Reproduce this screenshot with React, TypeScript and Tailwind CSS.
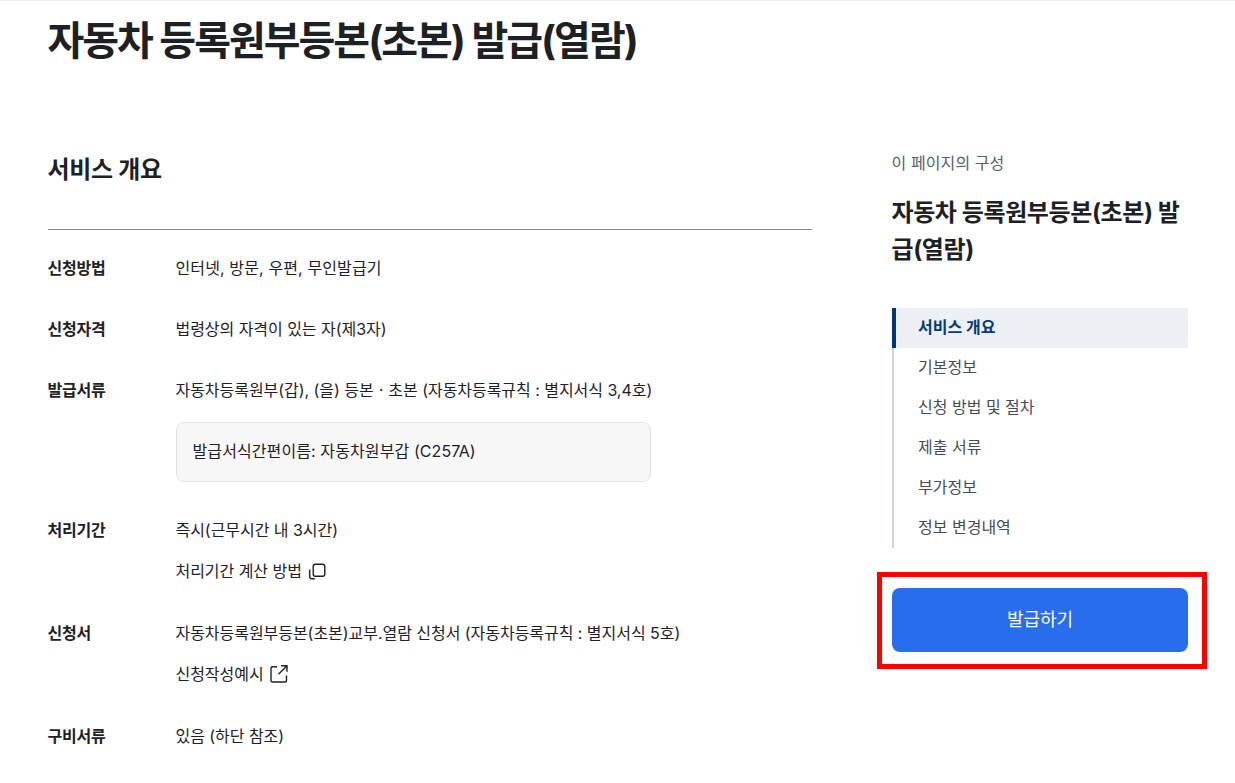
import React from "react";

const font = { fontFamily: '"Inter", "Noto Sans CJK KR", sans-serif' };

function CopyIcon() {
  return (
    <svg width="18" height="18" viewBox="0 0 18 18" fill="none" stroke="#1e2124" strokeWidth="1.4" className="ml-[6px] shrink-0">
      <rect x="5.200" y="2.200" width="11.600" height="12" rx="2.200" />
      <path d="M1.700 7.500V14.500a2.300 2.300 0 0 0 2.300 2.300h2.800" />
    </svg>
  );
}

function ExternalIcon() {
  return (
    <svg width="18" height="18" viewBox="0 0 18 18" fill="none" stroke="#1e2124" strokeWidth="1.4" className="ml-[6px] shrink-0">
      <path d="M7 1.700H2.500A1.500 1.500 0 0 0 1 3.200V15.500a1.500 1.500 0 0 0 1.500 1.500h12.500a1.500 1.500 0 0 0 1.500-1.500v-5" />
      <path d="M11 .700h6V6.700M17 .700 8.500 9.200" />
    </svg>
  );
}

function Row({ label, children }: { label: string; children: React.ReactNode }) {
  return (
    <div className="flex">
      <div className="w-[128px] shrink-0 text-[16px] leading-[26px] font-bold text-[#1e2124] tracking-[-0.2px]">{label}</div>
      <div className="flex-1 flex flex-col gap-[15px] text-[16px] leading-[26px] text-[#1e2124] tracking-[-0.040px]">{children}</div>
    </div>
  );
}

const nav = ["기본정보", "신청 방법 및 절차", "제출 서류", "부가정보", "정보 변경내역"];

export default function App() {
  return (
    <div style={font} className="h-[783px] w-[1235px] overflow-hidden bg-white border-t border-[#eeeeee] flex pl-[47.500px] pr-[47px] box-border">
      <main className="w-[764.500px] shrink-0">
        <h1 className="mt-[14px] text-[40px] leading-[52px] font-bold text-[#1e2124] tracking-[-2px] whitespace-nowrap">자동차 등록원부등본(초본) 발급(열람)</h1>
        <h2 className="mt-[86px] text-[24px] leading-[34px] font-bold text-[#1e2124] tracking-[-0.3px]">서비스 개요</h2>
        <div className="mt-[42px] border-t border-[#8a8a8a]" />
        <div className="mt-[25px] flex flex-col gap-[35px]">
          <Row label="신청방법"><p className="tracking-[0.120px]">인터넷, 방문, 우편, 무인발급기</p></Row>
          <Row label="신청자격"><p>법령상의 자격이 있는 자(제3자)</p></Row>
          <Row label="발급서류">
            <p>자동차등록원부(갑), (을) 등본ㆍ초본 (자동차등록규칙 : 별지서식 3,4호)</p>
            <div className="mt-[4px] w-[475px] h-[60px] box-border rounded-[8px] border border-[#e4e4e4] bg-[#f7f7f7] px-[16px] flex items-center"><span className="-mt-[3px] tracking-[0.100px]">발급서식간편이름: 자동차원부갑 (C257A)</span></div>
          </Row>
          <Row label="처리기간">
            <p>즉시(근무시간 내 3시간)</p>
            <p className="flex items-center">처리기간 계산 방법<CopyIcon /></p>
          </Row>
          <div className="mt-[1px]">
            <Row label="신청서">
              <p>자동차등록원부등본(초본)교부.열람 신청서 (자동차등록규칙 : 별지서식 5호)</p>
              <p className="flex items-center">신청작성예시<ExternalIcon /></p>
            </Row>
          </div>
          <div className="mt-[1px]">
            <Row label="구비서류"><p>있음 (하단 참조)</p></Row>
          </div>
        </div>
      </main>
      <aside className="ml-[79.500px] w-[296.500px] shrink-0">
        <p className="mt-[149px] text-[16px] leading-[26px] text-[#58616a] tracking-[0.100px]">이 페이지의 구성</p>
        <h3 className="mt-[17.500px] w-[296px] text-[24px] leading-[37px] font-bold text-[#1e2124] tracking-[-0.4px]">자동차 등록원부등본(초본) 발급(열람)</h3>
        <nav className="ml-[0.500px] mt-[40.500px] border-l-2 border-[#cdd5df] flex flex-col">
          <div className="-ml-[2px] h-[40px] pb-[2px] bg-[#ecf0f5] border-l-4 border-[#003675] pl-[22px] flex items-center text-[16px] font-bold text-[#063a74]">서비스 개요</div>
          {nav.map((n) => (
            <div key={n} className="h-[40px] pb-[2px] pl-[24px] flex items-center text-[16px] text-[#464c53]">{n}</div>
          ))}
        </nav>
        <div className="ml-[0.500px] relative mt-[40px]">
          <div className="h-[64px] pb-[2px] rounded-[8px] bg-[#286deb] flex items-center justify-center text-[18px] text-white">발급하기</div>
          <div className="absolute -left-[15px] -right-[19px] -top-[16px] -bottom-[17px] border-[5px] border-[#ff0000]" />
        </div>
      </aside>
    </div>
  );
}
